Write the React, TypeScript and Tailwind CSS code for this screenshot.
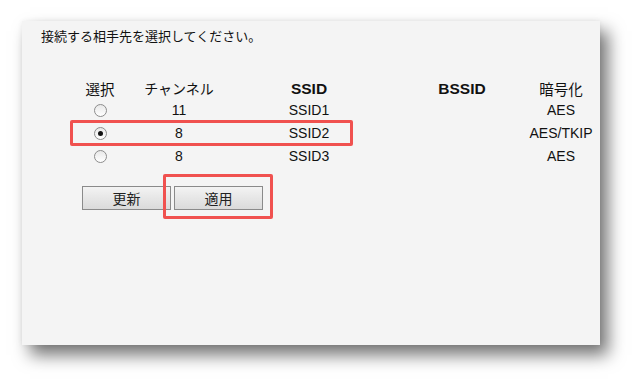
import React from "react";

const rows = [
  { ch: "11", ssid: "SSID1", enc: "AES", checked: false },
  { ch: "8", ssid: "SSID2", enc: "AES/TKIP", checked: true },
  { ch: "8", ssid: "SSID3", enc: "AES", checked: false },
];

function Radio({ checked }: { checked: boolean }) {
  return (
    <span className="flex h-[13px] w-[13px] items-center justify-center rounded-full border border-[#8c8c8c] bg-gradient-to-b from-[#e8e8e8] to-white">
      {checked && <span className="h-[5px] w-[5px] rounded-full bg-[#111]" />}
    </span>
  );
}

const grid = "grid grid-cols-[60px_98px_162px_144px_54px]";
const cell = "flex items-center justify-center whitespace-nowrap";
const jp = { fontFamily: '"Noto Sans CJK JP", sans-serif' };

export default function App() {
  return (
    <div
      className="h-[388px] w-[642px] overflow-hidden bg-white pl-[22px] pt-[21px] text-[#111]"
      style={{ fontFamily: '"Liberation Sans", "Noto Sans CJK JP", sans-serif' }}
    >
      <div className="relative flex h-[324px] w-[578px] flex-col bg-[#f4f4f4] pl-[19px] pt-[6px] shadow-[8px_10px_16px_rgba(0,0,0,0.55),0_0_5px_rgba(0,0,0,0.06)]">
        <div className="h-[18px] text-[13px] leading-[18px]" style={jp}>
          接続する相手先を選択してください。
        </div>
        <div className="ml-[29px] mt-[32px] flex flex-col">
          <div className={`${grid} h-[22px] text-[14px]`}>
            <div className={`${cell} text-[14.5px]`} style={jp}>選択</div>
            <div className={cell} style={jp}>チャンネル</div>
            <div className={`${cell} text-[15.5px] font-bold`}>SSID</div>
            <div className={`${cell} text-[15.5px] font-bold`}>BSSID</div>
            <div className={`${cell} text-[14.5px]`} style={jp}>暗号化</div>
          </div>
          {rows.map((r, i) => (
            <div key={i} className={`${grid} h-[23px] text-[14px]`}>
              <div className={cell}>
                <Radio checked={r.checked} />
              </div>
              <div className={cell}>{r.ch}</div>
              <div className={cell}>{r.ssid}</div>
              <div className={cell}></div>
              <div className={cell}>{r.enc}</div>
            </div>
          ))}
          <div className="ml-[12px] mt-[18px] flex gap-[3px]">
            {["更新", "適用"].map((t) => (
              <button
                key={t}
                className="flex h-[24px] w-[89px] items-center justify-center border border-[#8a8a8a] bg-gradient-to-b from-[#f3f3f3] to-[#dadada] text-[14px] text-[#222]"
                style={jp}
              >
                {t}
              </button>
            ))}
          </div>
        </div>
        <div className="absolute left-[48px] top-[99px] h-[26px] w-[283px] rounded-[2px] border-[3px] border-[#f0514f]" />
        <div className="absolute left-[141px] top-[153px] h-[45px] w-[110px] rounded-[2px] border-[3px] border-[#f0514f]" />
      </div>
    </div>
  );
}
